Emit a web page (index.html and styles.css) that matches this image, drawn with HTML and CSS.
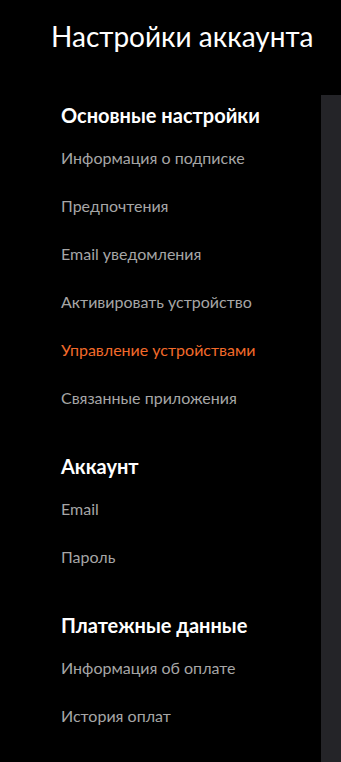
FILE: index.html
```html
<!DOCTYPE html>
<html lang="ru">
<head>
<meta charset="utf-8">
<link rel="stylesheet" href="styles.css">
</head>
<body>
<div class="page">
  <h1 class="title">Настройки аккаунта</h1>
  <div class="layout">
    <nav class="nav">
      <h2 class="heading">Основные настройки</h2>
      <ul class="list">
        <li class="item">Информация о подписке</li>
        <li class="item">Предпочтения</li>
        <li class="item">Email уведомления</li>
        <li class="item">Активировать устройство</li>
        <li class="item active">Управление устройствами</li>
        <li class="item">Связанные приложения</li>
      </ul>
      <h2 class="heading">Аккаунт</h2>
      <ul class="list">
        <li class="item">Email</li>
        <li class="item">Пароль</li>
      </ul>
      <h2 class="heading">Платежные данные</h2>
      <ul class="list">
        <li class="item">Информация об оплате</li>
        <li class="item">История оплат</li>
      </ul>
    </nav>
    <div class="panel"></div>
  </div>
</div>
</body>
</html>
```

FILE: styles.css
```css
html, body {
  margin: 0;
  padding: 0;
  background: #000;
  height: 100%;
}
body {
  font-family: Lato, "Noto Sans", sans-serif;
  color: #fff;
}
.page {
  display: flex;
  flex-direction: column;
  min-height: 100%;
}
.title {
  margin: 0;
  padding: 19px 0 0 51px;
  font-size: 28px;
  line-height: 34px;
  font-weight: 400;
  height: 95px;
  box-sizing: border-box;
  white-space: nowrap;
}
.layout {
  flex: 1;
  display: flex;
}
.nav {
  flex: 1;
  padding-left: 61px;
  padding-top: 8px;
}
.heading {
  margin: 32px 0 7px;
  font-size: 20px;
  line-height: 24px;
  font-weight: 700;
  color: #fff;
}
.heading:first-child {
  margin-top: 0;
}
.list {
  list-style: none;
  margin: 0;
  padding: 0;
}
.item {
  font-size: 16px;
  line-height: 48px;
  color: #a6a6a6;
}
.item.active {
  color: #f26a2a;
}
.panel {
  width: 20px;
  background: #242428;
}
```
